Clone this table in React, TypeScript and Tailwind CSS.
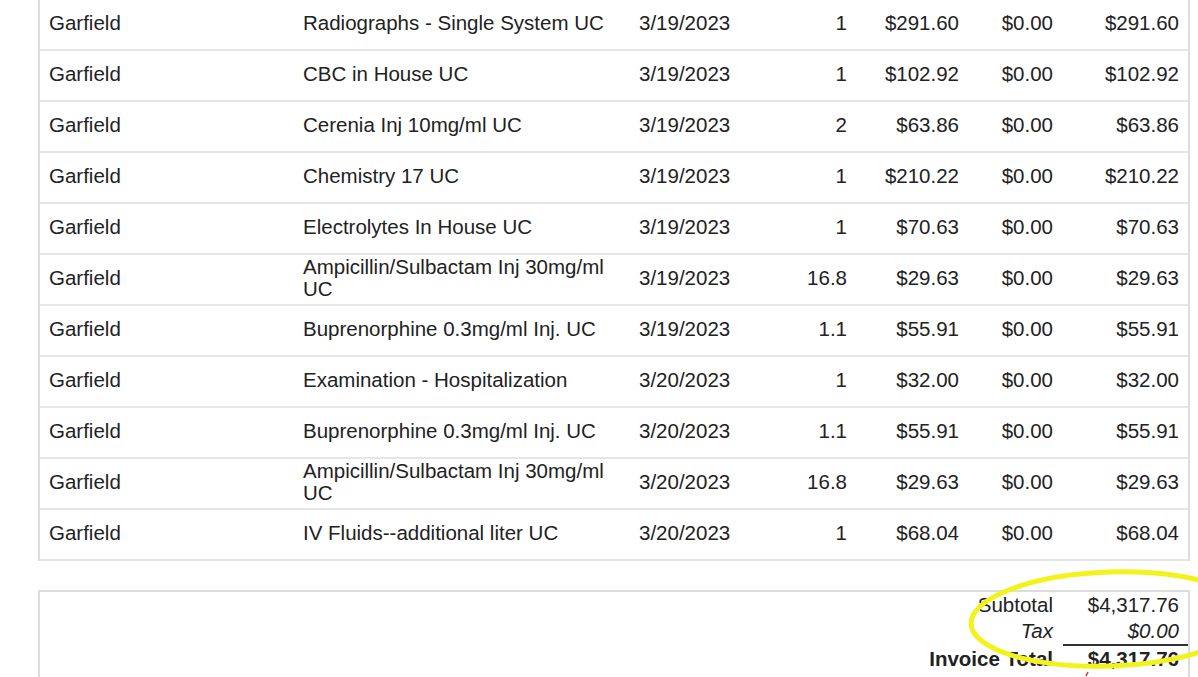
import React from "react";

type Line = {
  pet: string;
  desc: string;
  date: string;
  qty: string;
  price: string;
  disc: string;
  total: string;
};

const lines: Line[] = [
  { pet: "Garfield", desc: "Radiographs - Single System UC", date: "3/19/2023", qty: "1", price: "$291.60", disc: "$0.00", total: "$291.60" },
  { pet: "Garfield", desc: "CBC in House UC", date: "3/19/2023", qty: "1", price: "$102.92", disc: "$0.00", total: "$102.92" },
  { pet: "Garfield", desc: "Cerenia Inj 10mg/ml UC", date: "3/19/2023", qty: "2", price: "$63.86", disc: "$0.00", total: "$63.86" },
  { pet: "Garfield", desc: "Chemistry 17 UC", date: "3/19/2023", qty: "1", price: "$210.22", disc: "$0.00", total: "$210.22" },
  { pet: "Garfield", desc: "Electrolytes In House UC", date: "3/19/2023", qty: "1", price: "$70.63", disc: "$0.00", total: "$70.63" },
  { pet: "Garfield", desc: "Ampicillin/Sulbactam Inj 30mg/ml UC", date: "3/19/2023", qty: "16.8", price: "$29.63", disc: "$0.00", total: "$29.63" },
  { pet: "Garfield", desc: "Buprenorphine 0.3mg/ml Inj. UC", date: "3/19/2023", qty: "1.1", price: "$55.91", disc: "$0.00", total: "$55.91" },
  { pet: "Garfield", desc: "Examination - Hospitalization", date: "3/20/2023", qty: "1", price: "$32.00", disc: "$0.00", total: "$32.00" },
  { pet: "Garfield", desc: "Buprenorphine 0.3mg/ml Inj. UC", date: "3/20/2023", qty: "1.1", price: "$55.91", disc: "$0.00", total: "$55.91" },
  { pet: "Garfield", desc: "Ampicillin/Sulbactam Inj 30mg/ml UC", date: "3/20/2023", qty: "16.8", price: "$29.63", disc: "$0.00", total: "$29.63" },
  { pet: "Garfield", desc: "IV Fluids--additional liter UC", date: "3/20/2023", qty: "1", price: "$68.04", disc: "$0.00", total: "$68.04" },
];

const cell = "h-[51px] align-middle pb-[3px] border-b-2 border-[#e6e6e6]";

export default function App() {
  return (
    <div className="relative min-h-screen overflow-hidden bg-white text-[20.5px] leading-[22px] text-[#222] font-['Liberation_Sans',Arial,sans-serif]">
      <div className="pl-[38px] pr-[8px]">
        <div className="border-x-2 border-[#dcdcdc]">
          <table className="w-full table-fixed border-separate border-spacing-0">
            <colgroup>
              <col className="w-[253px]" />
              <col className="w-[336px]" />
              <col className="w-[128px]" />
              <col className="w-[100px]" />
              <col className="w-[112px]" />
              <col className="w-[94px]" />
              <col className="w-[125px]" />
            </colgroup>
            <tbody>
              {lines.map((l, i) => (
                <tr key={i}>
                  <td className={`${cell} pl-[9px]`}>{l.pet}</td>
                  <td className={`${cell} pl-[10px] pr-[10px]`}>{l.desc}</td>
                  <td className={`${cell} pl-[10px]`}>{l.date}</td>
                  <td className={`${cell} pr-[10px] text-right`}>{l.qty}</td>
                  <td className={`${cell} pr-[10px] text-right`}>{l.price}</td>
                  <td className={`${cell} pr-[10px] text-right`}>{l.disc}</td>
                  <td className={`${cell} pr-[9px] text-right`}>{l.total}</td>
                </tr>
              ))}
            </tbody>
          </table>
        </div>

        <div className="mt-[29px] h-[120px] border-x-2 border-t-2 border-[#dcdcdc] leading-[26px]">
          <div className="flex justify-end">
            <span className="text-right">Subtotal</span>
            <span className="ml-[10px] w-[125px] pr-[9px] text-right">$4,317.76</span>
          </div>
          <div className="flex justify-end italic">
            <span className="text-right">Tax</span>
            <span className="ml-[10px] w-[125px] border-b-2 border-[#333] pr-[9px] text-right">$0.00</span>
          </div>
          <div className="flex justify-end font-bold">
            <span className="text-right">Invoice Total</span>
            <span className="ml-[10px] w-[125px] pr-[9px] text-right">$4,317.76</span>
          </div>
        </div>
      </div>

      <svg className="pointer-events-none absolute left-0 top-0" width="1198" height="677" viewBox="0 0 1198 677">
        <ellipse
          cx="1110"
          cy="619"
          rx="139"
          ry="47"
          transform="rotate(-2 1110 619)"
          fill="none"
          stroke="#f3f31c"
          strokeWidth="5"
        />
        <path d="M1086 676 L1088 672" stroke="#e0303a" strokeWidth="1.5" fill="none" />
      </svg>
    </div>
  );
}
